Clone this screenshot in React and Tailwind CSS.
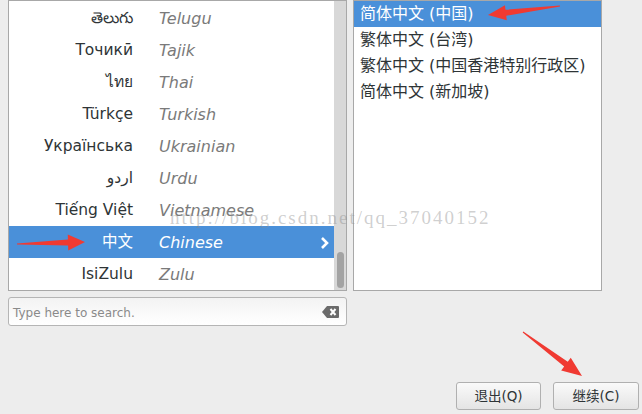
// Language picker dialog — installer style, with red annotation arrows on top.

const langs = [
  { native: "తెలుగు", name: "Telugu" },
  { native: "Точикӣ", name: "Tajik" },
  { native: "ไทย", name: "Thai" },
  { native: "Türkçe", name: "Turkish" },
  { native: "Українська", name: "Ukrainian" },
  { native: "اردو", name: "Urdu" },
  { native: "Tiếng Việt", name: "Vietnamese" },
  { native: "中文", name: "Chinese", selected: true },
  { native: "IsiZulu", name: "Zulu" },
];

const locales = [
  { label: "简体中文 (中国)", selected: true },
  { label: "繁体中文 (台湾)" },
  { label: "繁体中文 (中国香港特别行政区)" },
  { label: "简体中文 (新加坡)" },
];

const FONT = { fontFamily: '"DejaVu Sans", "Noto Sans", "Noto Sans CJK SC", sans-serif' };

// build a tapered arrow polygon from tail to tip
function arrowPoints(tx, ty, hx, hy, headLen, headW, tailW, neckW) {
  const dx = hx - tx;
  const dy = hy - ty;
  const len = Math.hypot(dx, dy);
  const ux = dx / len;
  const uy = dy / len;
  const px = -uy;
  const py = ux;
  const bx = hx - ux * headLen;
  const by = hy - uy * headLen;
  const pts = [
    [tx + px * tailW, ty + py * tailW],
    [bx + px * neckW, by + py * neckW],
    [bx + px * headW, by + py * headW],
    [hx, hy],
    [bx - px * headW, by - py * headW],
    [bx - px * neckW, by - py * neckW],
    [tx - px * tailW, ty - py * tailW],
  ];
  return pts.map((p) => p.join(",")).join(" ");
}

function LangRow({ lang }) {
  return (
    <div
      className={
        "flex items-center h-[32px] shrink-0 pt-[1px] " +
        (lang.selected ? "bg-[#4a90d9] text-white" : "text-[#2e3436]")
      }
    >
      <div className="w-[124px] text-right text-[15.5px] leading-none">{lang.native}</div>
      <div
        className={
          "ml-[26px] italic text-[16px] leading-none " +
          (lang.selected ? "text-white" : "text-[#7a7a7a]")
        }
      >
        {lang.name}
      </div>
      {lang.selected && (
        <svg className="ml-auto mr-[4px]" width="10" height="14" viewBox="0 0 10 14">
          <polyline points="2,2 7,7 2,12" fill="none" stroke="white" strokeWidth="2.6" />
        </svg>
      )}
    </div>
  );
}

export default function App() {
  return (
    <div className="relative w-[642px] h-[414px] bg-[#ededed] overflow-hidden" style={FONT}>
      {/* ── Panels ─────────────────────────────────────────── */}
      <div className="flex pl-[8px] gap-[6px]">
        <div className="w-[339px] flex flex-col">
          <div className="h-[291px] border border-[#a8a8a8] bg-white flex">
            <div className="flex-1 flex flex-col pt-[1px] overflow-hidden">
              {langs.map((l) => (
                <LangRow key={l.name} lang={l} />
              ))}
            </div>
            <div className="w-[12px] bg-[#d8d8d8] flex flex-col justify-end items-center pb-[2px]">
              <div className="w-[7px] h-[36px] rounded-full bg-[#a3a3a3]" />
            </div>
          </div>
          {/* search */}
          <div className="mt-[6px] h-[29px] rounded-[3px] border border-[#b5b5b5] bg-gradient-to-b from-[#f3f3f3] to-white flex items-center pl-[4px] pr-[7px]">
            <span className="text-[12px] text-[#8a8a8a] pt-[2px]">Type here to search.</span>
            <svg className="ml-auto" width="17" height="12" viewBox="0 0 17 12">
              <path d="M5 0 H16 a1 1 0 0 1 1 1 V11 a1 1 0 0 1 -1 1 H5 L0 6 Z" fill="#6b6b6b" />
              <path d="M8.5 3 L13.5 9 M13.5 3 L8.5 9" stroke="white" strokeWidth="2" />
            </svg>
          </div>
        </div>

        <div className="w-[249px] h-[291px] border border-[#a8a8a8] bg-white flex flex-col">
          {locales.map((loc) => (
            <div
              key={loc.label}
              className={
                "h-[26px] shrink-0 flex items-center pl-[6px] text-[16px] " +
                (loc.selected ? "bg-[#4a90d9] text-white h-[24px]" : "text-[#2e3436]")
              }
            >
              {loc.label}
            </div>
          ))}
        </div>
      </div>

      {/* ── Buttons ────────────────────────────────────────── */}
      <div className="flex justify-end gap-[12px] pr-[3px] mt-[56px]">
        <button className="w-[85px] h-[28px] rounded-[3px] border border-[#b0b0b0] bg-gradient-to-b from-[#fafafa] to-[#e4e4e4] text-[13.5px] text-[#2e3436]">
          退出(Q)
        </button>
        <button className="w-[86px] h-[28px] rounded-[3px] border border-[#b0b0b0] bg-gradient-to-b from-[#fafafa] to-[#e4e4e4] text-[13.5px] text-[#2e3436]">
          继续(C)
        </button>
      </div>

      {/* ── Watermark ──────────────────────────────────────── */}
      <div
        className="absolute left-[170px] top-[204px] text-[19px] tracking-[2px] text-[rgba(140,140,140,0.42)] pointer-events-none"
        style={{ fontFamily: '"Liberation Serif", serif' }}
      >
        http://blog.csdn.net/qq_37040152
      </div>

      {/* ── Annotation arrows ──────────────────────────────── */}
      <svg className="absolute inset-0 pointer-events-none" width="642" height="414">
        <polygon points={arrowPoints(17, 244, 85, 242, 17, 8, 0.5, 3)} fill="#f03a32" />
        <polygon points={arrowPoints(560, 6, 488, 15, 18, 7.5, 0.5, 3)} fill="#f03a32" />
        <polygon points={arrowPoints(523, 332, 582, 376, 20, 8, 0.5, 3)} fill="#f03a32" />
      </svg>
    </div>
  );
}
